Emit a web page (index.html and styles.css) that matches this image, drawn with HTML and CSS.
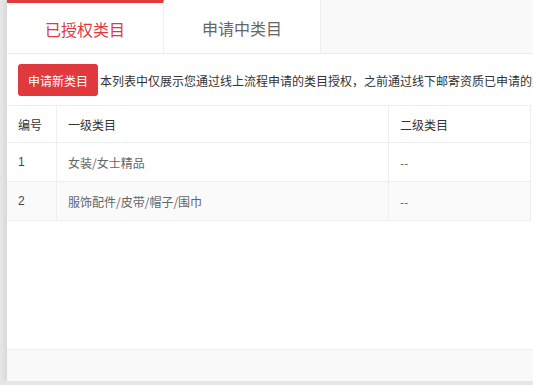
FILE: index.html
```html
<!DOCTYPE html>
<html lang="zh">
<head>
    <meta charset="UTF-8">
    <meta name="viewport" content="width=device-width, initial-scale=1.0">
    <title>类目管理</title>
    <link rel="stylesheet" href="styles.css">
</head>
<body>
    <div class="wrap">
        <!-- 標籤頁 -->
        <div class="tabs">
            <div class="tab active">已授权类目</div>
            <div class="tab">申请中类目</div>
        </div>

        <!-- 內容區 -->
        <div class="panel">
            <div class="toolbar">
                <button class="btn btn-red">申请新类目</button>
                <span class="tip">本列表中仅展示您通过线上流程申请的类目授权，之前通过线下邮寄资质已申请的类目不在此列表中展示。</span>
            </div>
            <table class="cat-table">
                <thead>
                    <tr>
                        <th class="col-no">编号</th>
                        <th class="col-first">一级类目</th>
                        <th>二级类目</th>
                    </tr>
                </thead>
                <tbody>
                    <tr>
                        <td class="num">1</td>
                        <td>女装/女士精品</td>
                        <td>--</td>
                    </tr>
                    <tr class="alt">
                        <td class="num">2</td>
                        <td>服饰配件/皮带/帽子/围巾</td>
                        <td>--</td>
                    </tr>
                </tbody>
            </table>
        </div>
        <div class="footer"></div>
    </div>
</body>
</html>
```

FILE: styles.css
```css
/* 基本樣式 */
body {
    margin: 0;
    background-color: #e6e6e6;
    font-family: "Noto Sans CJK SC", "Liberation Sans", sans-serif;
    font-size: 12px;
    color: #333;
    overflow: hidden;
}
.wrap {
    margin-left: 7px;
    height: 381px;
    background-color: #f9f9f9;
    box-shadow: -3px 0 4px rgba(0,0,0,0.06);
    display: flex;
    flex-direction: column;
    overflow: hidden;
}

/* 標籤頁 */
.tabs {
    display: flex;
    height: 53px;
}
.tab {
    width: 156px;
    background-color: #fff;
    color: #666;
    font-size: 16px;
    text-align: center;
    line-height: 56px;
    border-right: 1px solid #f0f0f0;
}
.tab.active {
    color: #dc3a40;
    border-top: 3px solid #e0393e;
    line-height: 53px;
    height: 50px;
}

/* 內容區 */
.panel {
    flex: 1;
    background-color: #fff;
    border-top: 1px solid #ececec;
    white-space: nowrap;
}
.toolbar {
    display: flex;
    align-items: center;
    gap: 2px;
    padding: 10px 0 9px 11px;
}
.toolbar > * {
    flex: none;
}
.btn {
    width: 80px;
    height: 32px;
    padding: 0;
    border: none;
    border-radius: 3px;
    font-family: inherit;
    font-size: 12px;
    cursor: pointer;
}
.btn-red {
    background-color: #e0393e;
    color: #fff;
}
.tip {
    color: #333;
}

/* 表格 */
.cat-table {
    width: 524px;
    border-collapse: collapse;
    border-top: 1px solid #eee;
}
.cat-table th, .cat-table td {
    height: 38px;
    padding: 0 11px;
    text-align: left;
    border-bottom: 1px solid #eee;
    border-right: 1px solid #eee;
}
.cat-table th {
    height: 36px;
    font-weight: normal;
    color: #333;
}
.cat-table td {
    color: #666;
}
.cat-table td.num {
    font-family: "Liberation Sans", sans-serif;
    color: #444;
}
.col-no {
    width: 27px;
}
.col-first {
    width: 309px;
}
.cat-table tr.alt td {
    background-color: #fafafa;
}

.footer {
    height: 31px;
    background-color: #f9f9f9;
    border-top: 1px solid #eee;
}
```
